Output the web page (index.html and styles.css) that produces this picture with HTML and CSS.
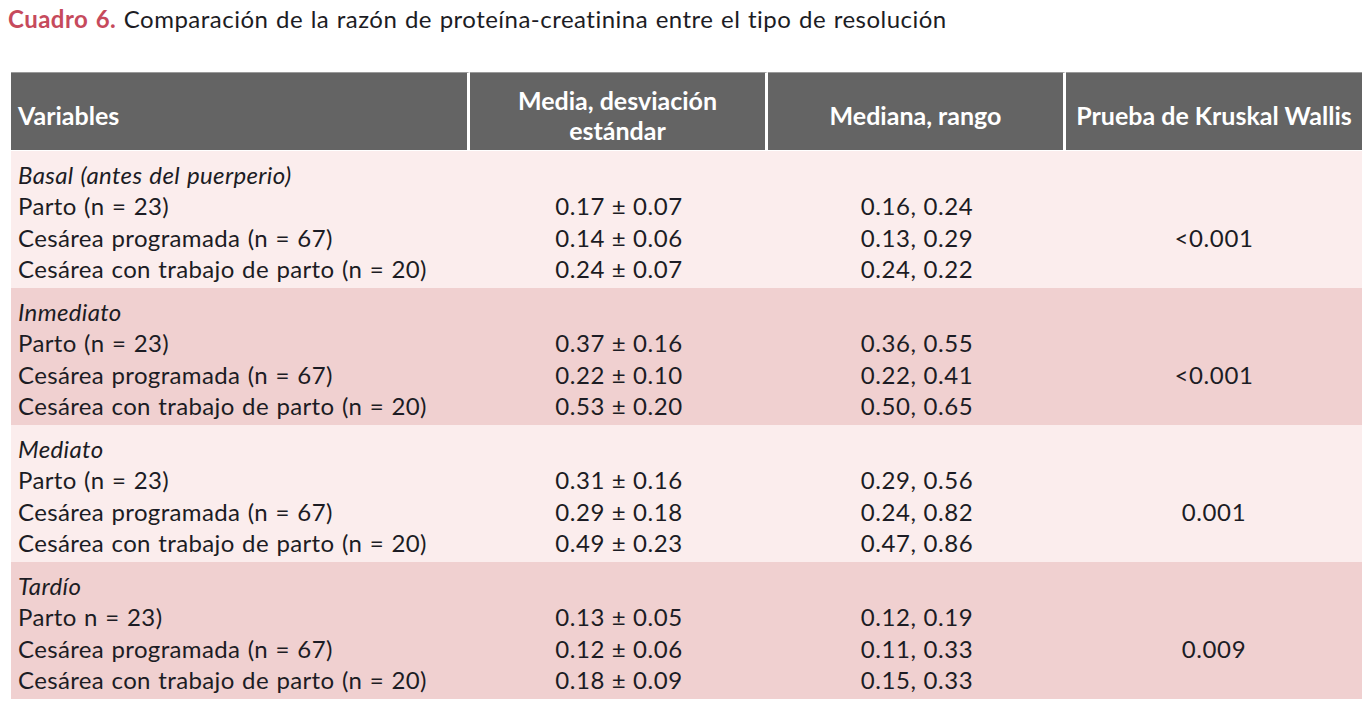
FILE: index.html
```html
<!DOCTYPE html>
<html lang="es">
<head>
<meta charset="utf-8">
<title>Cuadro 6</title>
<link rel="stylesheet" href="styles.css">
</head>
<body>
<p class="caption"><span class="label">Cuadro 6.</span> Comparación de la razón de proteína-creatinina entre el tipo de resolución</p>
<table class="data">
  <colgroup>
    <col class="c1"><col class="c2"><col class="c3"><col class="c4">
  </colgroup>
  <thead>
    <tr>
      <th class="left">Variables</th>
      <th>Media, desviación<br>estándar</th>
      <th>Mediana, rango</th>
      <th class="last">Prueba de Kruskal Wallis</th>
    </tr>
  </thead>
  <tbody class="light">
    <tr class="first"><td class="group">Basal (antes del puerperio)</td><td></td><td></td><td></td></tr>
    <tr><td>Parto (n = 23)</td><td>0.17 ± 0.07</td><td>0.16, 0.24</td><td></td></tr>
    <tr><td>Cesárea programada (n = 67)</td><td>0.14 ± 0.06</td><td>0.13, 0.29</td><td>&lt;0.001</td></tr>
    <tr class="end"><td>Cesárea con trabajo de parto (n = 20)</td><td>0.24 ± 0.07</td><td>0.24, 0.22</td><td></td></tr>
  </tbody>
  <tbody class="dark">
    <tr class="first"><td class="group">Inmediato</td><td></td><td></td><td></td></tr>
    <tr><td>Parto (n = 23)</td><td>0.37 ± 0.16</td><td>0.36, 0.55</td><td></td></tr>
    <tr><td>Cesárea programada (n = 67)</td><td>0.22 ± 0.10</td><td>0.22, 0.41</td><td>&lt;0.001</td></tr>
    <tr class="end"><td>Cesárea con trabajo de parto (n = 20)</td><td>0.53 ± 0.20</td><td>0.50, 0.65</td><td></td></tr>
  </tbody>
  <tbody class="light">
    <tr class="first"><td class="group">Mediato</td><td></td><td></td><td></td></tr>
    <tr><td>Parto (n = 23)</td><td>0.31 ± 0.16</td><td>0.29, 0.56</td><td></td></tr>
    <tr><td>Cesárea programada (n = 67)</td><td>0.29 ± 0.18</td><td>0.24, 0.82</td><td>0.001</td></tr>
    <tr class="end"><td>Cesárea con trabajo de parto (n = 20)</td><td>0.49 ± 0.23</td><td>0.47, 0.86</td><td></td></tr>
  </tbody>
  <tbody class="dark">
    <tr class="first"><td class="group">Tardío</td><td></td><td></td><td></td></tr>
    <tr><td>Parto n = 23)</td><td>0.13 ± 0.05</td><td>0.12, 0.19</td><td></td></tr>
    <tr><td>Cesárea programada (n = 67)</td><td>0.12 ± 0.06</td><td>0.11, 0.33</td><td>0.009</td></tr>
    <tr class="end"><td>Cesárea con trabajo de parto (n = 20)</td><td>0.18 ± 0.09</td><td>0.15, 0.33</td><td></td></tr>
  </tbody>
</table>
</body>
</html>
```

FILE: styles.css
```css
html, body {
  margin: 0;
  padding: 0;
  background: #ffffff;
}
body {
  font-family: Lato, "Open Sans", sans-serif;
  color: #1c1c24;
}
.caption {
  margin: 0;
  padding: 4px 0 0 8px;
  height: 31px;
  font-size: 24px;
  line-height: 30px;
  letter-spacing: 0.48px;
  word-spacing: 1px;
  color: #1c1c24;
}
.label {
  color: #c64a5c;
  font-weight: 700;
}
.data {
  margin: 37px 0 0 11px;
  border-collapse: separate;
  border-spacing: 0;
  width: 1351px;
  table-layout: fixed;
}
.c1 { width: 459px; }
.c2 { width: 298px; }
.c3 { width: 298px; }
.c4 { width: 296px; }
.data th {
  box-sizing: border-box;
  background: #646464;
  color: #ffffff;
  font-weight: 700;
  font-size: 25px;
  line-height: 30px;
  height: 79px;
  padding: 6px 0 0 0;
  text-align: center;
  border-top: 1px solid #9a9a9a;
  border-right: 3px solid #ffffff;
  border-bottom: 1px solid #ffffff;
}
.data th.left {
  text-align: left;
  padding-left: 7px;
}
.data th.last {
  border-right: 0;
}
.data td {
  font-size: 24px;
  line-height: 31.33px;
  letter-spacing: 0.6px;
  padding: 0;
  text-align: center;
  white-space: nowrap;
}
.data td:first-child {
  text-align: left;
  padding-left: 7px;
  letter-spacing: 0.35px;
  word-spacing: 1px;
}
.data td.group {
  font-style: italic;
}
.data tr.first td {
  padding-top: 8px;
}
.data tr.end td {
  padding-bottom: 3.7px;
}
.light td { background: #fbeded; }
.dark td { background: #f0d0d0; }
```
